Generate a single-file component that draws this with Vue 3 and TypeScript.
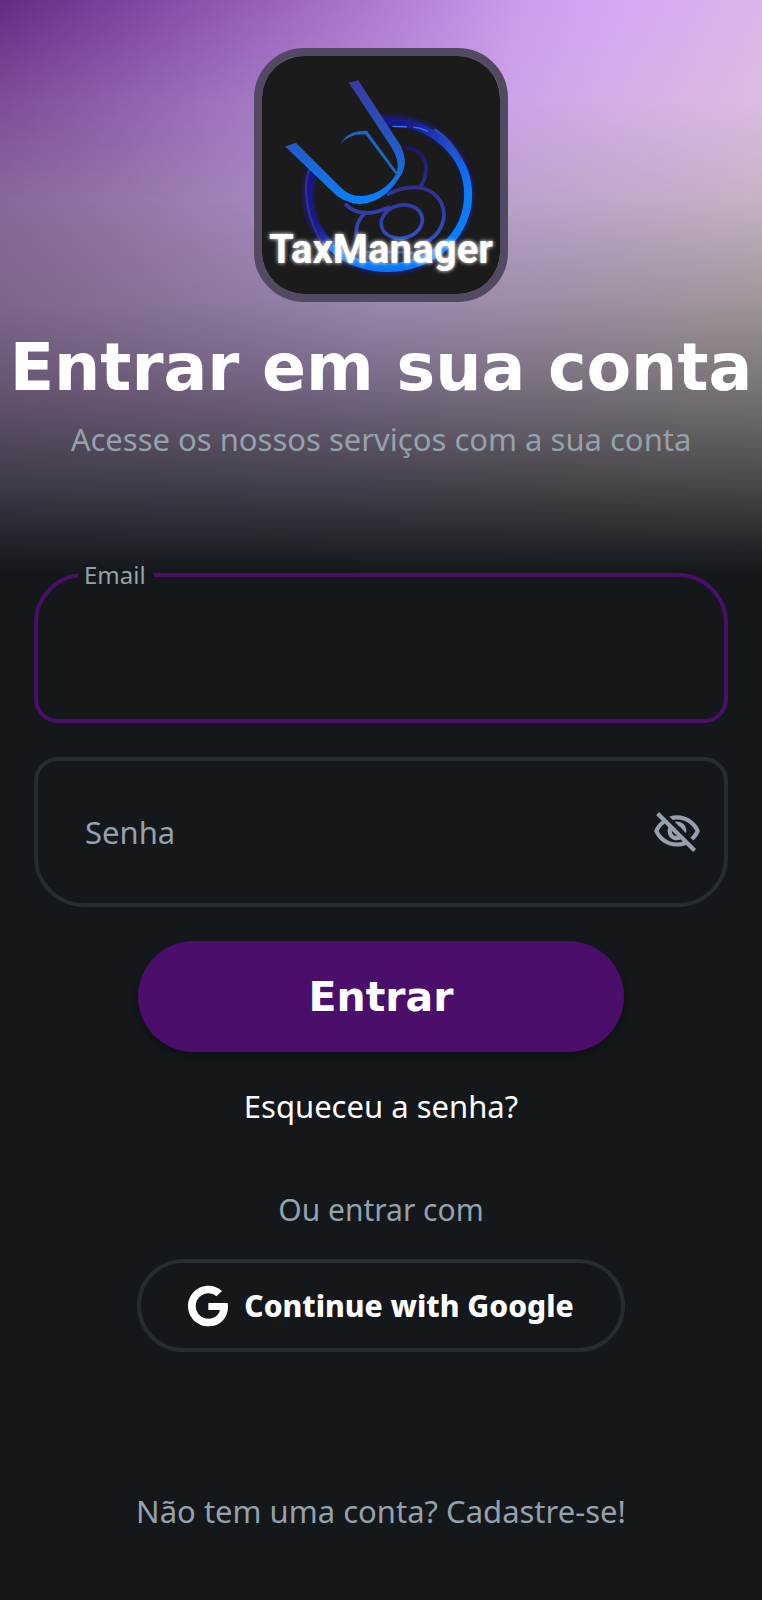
<script setup lang="ts">
import { ref } from 'vue'

const email = ref('')
const password = ref('')
const showPassword = ref(false)

// Horizontal colour bands of the header glow; each one blends into the next.
const bands: string[] = ['b0', 'b1', 'b2', 'b3', 'b4', 'b5', 'b6']
</script>

<template>
  <main class="page">
    <header class="hero">
      <div class="glow" aria-hidden="true">
        <span v-for="band in bands" :key="band" class="band" :class="band"></span>
      </div>
      <svg class="logo" viewBox="53 50 710 710" role="img" aria-label="TaxManager">
        <defs>
          <linearGradient id="uFill" x1="0" y1="120" x2="0" y2="490" gradientUnits="userSpaceOnUse">
            <stop offset="0" stop-color="#3a3a9e" />
            <stop offset="0.5" stop-color="#2458c4" />
            <stop offset="1" stop-color="#0a80fb" />
          </linearGradient>
          <linearGradient id="ringFill" x1="250" y1="250" x2="580" y2="560" gradientUnits="userSpaceOnUse">
            <stop offset="0" stop-color="#16137a" />
            <stop offset="0.4" stop-color="#191a8c" />
            <stop offset="0.7" stop-color="#1b52d8" />
            <stop offset="1" stop-color="#0a7cf8" />
          </linearGradient>
          <linearGradient id="coilFill" x1="0" y1="320" x2="0" y2="620" gradientUnits="userSpaceOnUse">
            <stop offset="0" stop-color="#1b1666" />
            <stop offset="0.5" stop-color="#32349a" />
            <stop offset="1" stop-color="#2b55cc" />
          </linearGradient>
          <filter id="halo" x="-20%" y="-20%" width="140%" height="140%">
            <feGaussianBlur stdDeviation="7" />
          </filter>
        </defs>
        <rect x="53" y="50" width="710" height="710" fill="#1b1b1b" />
        <ellipse cx="430" cy="464" rx="240" ry="222" fill="none" stroke="#1a24b8" stroke-width="30" opacity="0.5" filter="url(#halo)" />
        <g fill="none" stroke-linecap="round">
          <ellipse cx="430" cy="464" rx="238" ry="218" stroke="url(#ringFill)" stroke-width="24" />
          <path d="M240 620 Q186 540 184 440 Q186 400 200 378" stroke="#39308c" stroke-width="6" />
          <path d="M268 626 Q330 682 430 682 Q530 676 600 610" stroke="#0878f5" stroke-width="24" />
          <path d="M300 640 Q400 628 540 640" stroke="#1646c0" stroke-width="8" />
          <path d="M444 260 L484 261 M506 262 Q526 264 546 274" stroke="#3a78e8" stroke-width="4" />
          <path d="M570 270 Q620 304 646 356" stroke="#3347b4" stroke-width="7" />
          <g stroke="url(#coilFill)" stroke-width="11">
            <path d="M484 324 C526 324 552 366 540 406 Q536 424 528 436" />
            <path d="M430 462 C480 436 530 436 562 458 Q596 484 596 524 Q592 580 540 606" />
            <path d="M304 494 Q330 520 372 518 Q400 516 430 502" />
            <path d="M336 600 Q328 548 358 522" />
            <ellipse cx="470" cy="544" rx="62" ry="49" transform="rotate(-14 470 544)" />
          </g>
        </g>
        <path d="M140 316 L326 128 L466 316 Q494 372 462 414 Q416 488 344 490 Q292 488 258 450 Z" fill="#1b1b1b" />
        <path d="M312 130 L340 122 L466 316 Q494 372 462 414 Q416 488 344 492 Q292 488 258 450 L122 320 L154 309 L286 440 Q312 468 348 468 Q416 462 452 404 Q468 372 440 324 Z" fill="url(#uFill)" />
        <path d="M288 312 Q308 272 366 273 L462 404 L455 408 L362 284 Q316 280 288 312 Z" fill="#1d66c8" />
        <text x="408" y="667" text-anchor="middle" class="logo-halo" filter="url(#halo)" aria-hidden="true">TaxManager</text>
        <text x="408" y="667" text-anchor="middle" class="logo-text">TaxManager</text>
      </svg>
      <h1 class="title">Entrar em sua conta</h1>
      <p class="subtitle">Acesse os nossos serviços com a sua conta</p>
    </header>

    <form class="form" @submit.prevent>
      <fieldset class="field field-email">
        <legend class="legend"><label for="email">Email</label></legend>
        <input id="email" v-model="email" class="input" type="email" autocomplete="email" />
      </fieldset>

      <div class="field field-password">
        <label v-show="!password" class="placeholder" for="password">Senha</label>
        <input
          id="password"
          v-model="password"
          class="input"
          :type="showPassword ? 'text' : 'password'"
          autocomplete="current-password"
        />
        <button class="eye" type="button" aria-label="Mostrar senha" @click="showPassword = !showPassword">
          <svg viewBox="0 0 24 24" width="50" height="50" fill="currentColor" aria-hidden="true">
            <path d="M12 6c3.79 0 7.17 2.13 8.82 5.5-.59 1.22-1.42 2.27-2.41 3.12l1.41 1.41c1.39-1.23 2.49-2.77 3.18-4.53C21.27 7.11 17 4 12 4c-1.27 0-2.49.2-3.64.57l1.65 1.65C10.66 6.09 11.32 6 12 6zm-1.07 1.14L13 9.21c.57.25 1.03.71 1.28 1.28l2.07 2.07c.08-.34.14-.7.14-1.07C16.5 9.01 14.48 7 12 7c-.37 0-.72.05-1.07.14zM2.01 3.87l2.68 2.68C3.06 7.83 1.77 9.53 1 11.5 2.73 15.89 7 19 12 19c1.52 0 2.98-.29 4.32-.82l3.42 3.42 1.41-1.41L3.42 2.45 2.01 3.87zm7.5 7.5l2.61 2.61c-.04.01-.08.02-.12.02-1.38 0-2.5-1.12-2.5-2.5 0-.05.01-.08.01-.13zm-3.4-3.4l1.75 1.75c-.23.55-.36 1.15-.36 1.78 0 2.48 2.02 4.5 4.5 4.5.63 0 1.23-.13 1.77-.36l.98.98c-.88.24-1.8.38-2.75.38-3.79 0-7.17-2.13-8.82-5.5.7-1.43 1.72-2.61 2.93-3.53z" />
          </svg>
        </button>
      </div>

      <button class="submit" type="submit">Entrar</button>
    </form>

    <a class="link forgot" href="#">Esqueceu a senha?</a>

    <p class="alt">Ou entrar com</p>
    <button class="google" type="button">
      <svg viewBox="0 0 488 512" width="40" height="42" fill="currentColor" aria-hidden="true">
        <path d="M488 261.8C488 403.3 391.1 504 248 504 110.8 504 0 393.2 0 256S110.8 8 248 8c66.8 0 123 24.5 166.3 64.9l-67.5 64.9C258.5 52.6 94.3 116.6 94.3 256c0 86.5 69.1 156.6 153.7 156.6 98.2 0 135-70.4 140.8-106.9H248v-85.3h236.1c2.3 12.7 3.9 24.9 3.9 41.4z" />
      </svg>
      Continue with Google
    </button>

    <a class="link signup" href="#">Não tem uma conta? Cadastre-se!</a>
  </main>
</template>

<style>
body {
  background: #14181b;
}
</style>

<style scoped>
.page {
  isolation: isolate;
  box-sizing: border-box;
  display: flex;
  flex-direction: column;
  align-items: center;
  min-height: 100vh;
  padding-bottom: 69px;
  background: #14181b;
  color: #95a1ac;
  font-family: 'Noto Sans', 'Open Sans', sans-serif;
  font-size: 31px;
  line-height: 40px;
}

.hero {
  position: relative;
  box-sizing: border-box;
  align-self: stretch;
  display: flex;
  flex-direction: column;
  align-items: center;
  padding: 48px 0 114px;
  text-align: center;
}

.glow {
  position: absolute;
  inset: 0;
  z-index: -1;
}

.band {
  position: absolute;
  inset: 0;
}

.b0 {
  background: linear-gradient(90deg, #672b83, #7d439f 16%, #965fb7 33%, #b07ad2 50%, #c99aea 67%, #d4a4f5 77%, #dcb5ec);
}

.b1 {
  background: linear-gradient(90deg, #804d98, #9161ae 16%, #a577c3 33%, #b98cd6 50%, #cca3e7 67%, #d3b0e6 82%, #dabce0);
  mask-image: linear-gradient(transparent, #000 18%);
}

.b2 {
  background: linear-gradient(90deg, #866a9c, #9376a8 16%, #a386bb 33%, #b095c6 50%, #baa2cc 67%, #c6b2c4);
  mask-image: linear-gradient(transparent 18%, #000 35%);
}

.b3 {
  background: linear-gradient(90deg, #7d6689, #8f7aa1 33%, #9a87ac 50%, #9d8ca6 67%, #9f9599);
  mask-image: linear-gradient(transparent 35%, #000 53%);
}

.b4 {
  background: linear-gradient(90deg, #665472, #70607c 33%, #746882 50%, #766d7d 67%, #777474);
  mask-image: linear-gradient(transparent 53%, #000 68%);
}

.b5 {
  background: linear-gradient(90deg, #403c49, #46424e 50%, #47454a 67%, #4a4a4b);
  mask-image: linear-gradient(transparent 68%, #000 84%);
}

.b6 {
  background: #14181b;
  mask-image: linear-gradient(transparent 84%, #000);
}

.logo {
  box-sizing: border-box;
  width: 254px;
  height: 254px;
  border: 8px solid #524a63;
  border-radius: 50px;
}

.logo-text,
.logo-halo {
  fill: #ffffff;
  font-family: Roboto, sans-serif;
  font-size: 120px;
  font-weight: 700;
}

.title {
  margin: 28px 0 0;
  color: #ffffff;
  font-family: 'DejaVu Sans', sans-serif;
  font-size: 65px;
  font-weight: 700;
  line-height: 76px;
  white-space: nowrap;
}

.subtitle {
  margin: 13px 0 0;
}

.form {
  box-sizing: border-box;
  align-self: stretch;
  display: flex;
  flex-direction: column;
  align-items: center;
  gap: 34px;
  padding: 0 34px;
}

.field {
  box-sizing: border-box;
  width: 100%;
  min-width: 0;
  margin: 0;
  border: 4px solid #272c33;
}

.field-email {
  padding: 0 44px;
  border-color: #4b0f6b;
  border-radius: 50px 50px 24px 24px;
}

.legend {
  height: 4px;
  margin-left: -4px;
  padding: 0 8px 0 6px;
  font-size: 24px;
  line-height: 4px;
}

.field-password {
  display: grid;
  grid-template-columns: 1fr auto;
  align-items: center;
  padding: 0 22px 0 47px;
  border-radius: 24px 24px 50px 50px;
}

.placeholder,
.field-password .input {
  grid-area: 1 / 1;
}

.placeholder {
  pointer-events: none;
}

.input {
  display: block;
  box-sizing: border-box;
  width: 100%;
  min-width: 0;
  height: 142px;
  padding: 0;
  border: 0;
  outline: 0;
  background: transparent;
  color: #ffffff;
  font: inherit;
}

.eye {
  display: flex;
  padding: 0;
  border: 0;
  background: none;
  color: #95a1ac;
  cursor: pointer;
}

.submit,
.google {
  box-sizing: border-box;
  border-radius: 56px;
  color: #ffffff;
  cursor: pointer;
}

.submit {
  width: 70%;
  height: 111px;
  padding: 0;
  border: 0;
  background: #4b0f6b;
  box-shadow: 0 4px 8px rgba(0, 0, 0, 0.3);
  font: 700 41px/48px 'DejaVu Sans', sans-serif;
}

.link {
  color: inherit;
  text-decoration: none;
}

.forgot {
  margin-top: 34px;
  color: #ffffff;
}

.alt {
  margin: 64px 0 29px;
  font-size: 30px;
}

.google {
  display: flex;
  align-items: center;
  justify-content: center;
  gap: 16px;
  width: 64%;
  height: 93px;
  padding: 0;
  border: 4px solid #272c33;
  background: none;
  font: inherit;
  font-size: 30px;
  font-weight: 800;
}

.signup {
  margin-top: auto;
}
</style>
